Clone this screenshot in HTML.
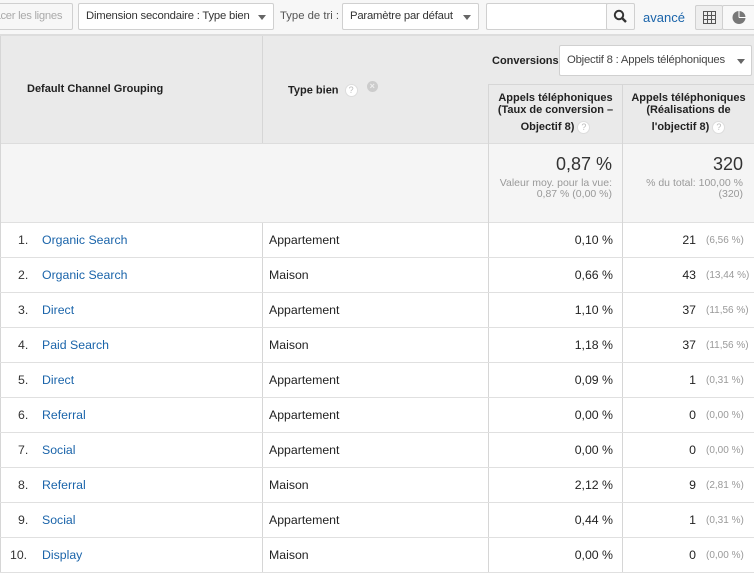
<!DOCTYPE html>
<html><head><meta charset="utf-8"><style>
*{box-sizing:border-box;margin:0;padding:0}
body{width:754px;height:580px;overflow:hidden;background:#fff;font-family:"Liberation Sans",Arial,sans-serif;font-size:12px;color:#222;position:relative}
.a{position:absolute}
.btn{position:absolute;border:1px solid #d0d0d0;border-radius:2px;background:#fff;height:27px;top:3px;line-height:25px;font-size:11.3px;color:#333;padding-left:7px;white-space:nowrap;overflow:hidden}
.caret{position:absolute;right:7px;top:11px;width:0;height:0;border-left:4px solid transparent;border-right:4px solid transparent;border-top:5px solid #666}
.q{display:inline-block;width:13px;height:13px;border-radius:50%;background:#fff;border:1px solid #ddd;color:#bbb;font-size:9px;line-height:11px;text-align:center;font-weight:normal;vertical-align:middle}
.hd{font-weight:bold;font-size:11px;color:#222}
.row{position:absolute;left:0;width:754px;height:35px;border-bottom:1px solid #e0e0e0;font-size:12.3px;line-height:35px}
.row span{position:absolute}
.n{left:18px;color:#333}
.c{left:42px;color:#1a64aa}
.t{left:269px;color:#222}
.p{right:141px;color:#222}
.v{right:58px;color:#222}
.s{left:706px;color:#999;font-size:10px}
.vl{position:absolute;width:1px;background:#d6d6d6}
</style></head><body>
<div class="a" style="left:0;top:0;width:754px;height:36px;background:#f7f7f7;border-bottom:2px solid #ddd"></div>
<div class="btn" style="left:-10px;width:83px;color:#aaa;padding-left:0;background:#f7f7f7;letter-spacing:-0.3px">racer les lignes</div>
<div class="btn" style="left:78px;width:196px;letter-spacing:-0.2px">Dimension secondaire : Type bien<i class="caret"></i></div>
<div class="a" style="left:280px;top:10px;color:#555;font-size:11.3px">Type de tri :</div>
<div class="btn" style="left:342px;width:137px;letter-spacing:-0.2px">Paramètre par défaut<i class="caret"></i></div>
<div class="btn" style="left:486px;width:122px;border-right:none"></div>
<div class="btn" style="left:606px;width:29px;padding:0;background:#f8f8f8"><svg width="27" height="25" viewBox="0 0 27 25"><circle cx="12" cy="11" r="4.2" fill="none" stroke="#333" stroke-width="2"/><path d="M15 14l4 4" stroke="#333" stroke-width="2.4"/></svg></div>
<div class="a" style="left:643px;top:10px;color:#1a64aa;font-size:13px">avancé</div>
<div class="btn" style="left:695px;width:28px;top:5px;height:25px;padding:0;background:#eee"><svg width="26" height="23" viewBox="0 0 26 23"><g fill="none" stroke="#555" stroke-width="1"><rect x="7.5" y="5.5" width="12" height="12"/><path d="M11.5 5.5v12M15.5 5.5v12M7.5 9.5h12M7.5 13.5h12"/></g></svg></div>
<div class="btn" style="left:722px;width:40px;top:5px;height:25px;padding:0;background:#f8f8f8"><svg width="30" height="23" viewBox="0 0 30 23"><circle cx="16" cy="11.5" r="6.5" fill="#777"/><path d="M16 11.5V5M16 11.5H22.5" stroke="#fff" stroke-width="1"/></svg></div>

<div class="a" style="left:0;top:36px;width:754px;height:107px;background:#eaeaea"></div>
<div class="a" style="left:488px;top:84px;width:266px;height:1px;background:#d6d6d6"></div>
<div class="a" style="left:0;top:143px;width:754px;height:80px;background:#f5f5f5;border-top:1px solid #ddd;border-bottom:1px solid #e0e0e0"></div>
<div class="vl" style="left:0;top:36px;height:537px"></div>
<div class="vl" style="left:262px;top:36px;height:107px"></div>
<div class="vl" style="left:262px;top:223px;height:350px"></div>
<div class="vl" style="left:488px;top:84px;height:489px"></div>
<div class="vl" style="left:622px;top:84px;height:489px"></div>

<div class="a hd" style="left:27px;top:83px">Default Channel Grouping</div>
<div class="a hd" style="left:288px;top:84px">Type bien &nbsp;<span class="q">?</span> <span style="display:inline-block;width:11px;height:11px;border-radius:50%;background:#ccc;color:#eee;font-size:9px;line-height:11px;text-align:center;vertical-align:middle;margin-left:6px;margin-top:-8px">×</span></div>
<div class="a hd" style="left:492px;top:55px">Conversions</div>
<div class="btn" style="left:559px;top:45px;width:193px;height:31px;line-height:29px;color:#444;padding-left:7px;letter-spacing:-0.2px">Objectif 8 : Appels téléphoniques<i class="caret" style="top:13px;right:6px"></i></div>
<div class="a hd" style="left:489px;top:92px;width:133px;text-align:center;line-height:12px">Appels téléphoniques<br>(Taux de conversion –<br><span style="line-height:22px">Objectif 8) <span class="q">?</span></span></div>
<div class="a hd" style="left:623px;top:92px;width:131px;text-align:center;line-height:12px">Appels téléphoniques<br>(Réalisations de<br><span style="line-height:22px">l'objectif 8) <span class="q">?</span></span></div>

<div class="a" style="right:142px;top:154px;font-size:18px;color:#333">0,87 %</div>
<div class="a" style="right:142px;top:178px;font-size:10.5px;color:#999;text-align:right;line-height:11px">Valeur moy. pour la vue:<br>0,87 % (0,00 %)</div>
<div class="a" style="right:11px;top:154px;font-size:18px;color:#333">320</div>
<div class="a" style="right:11px;top:178px;font-size:10.5px;color:#999;text-align:right;line-height:11px">% du total: 100,00 %<br>(320)</div>

<div class="row" style="top:223px"><span class="n">1.</span><span class="c">Organic Search</span><span class="t">Appartement</span><span class="p">0,10 %</span><span class="v">21</span><span class="s">(6,56 %)</span></div>
<div class="row" style="top:258px"><span class="n">2.</span><span class="c">Organic Search</span><span class="t">Maison</span><span class="p">0,66 %</span><span class="v">43</span><span class="s">(13,44 %)</span></div>
<div class="row" style="top:293px"><span class="n">3.</span><span class="c">Direct</span><span class="t">Appartement</span><span class="p">1,10 %</span><span class="v">37</span><span class="s">(11,56 %)</span></div>
<div class="row" style="top:328px"><span class="n">4.</span><span class="c">Paid Search</span><span class="t">Maison</span><span class="p">1,18 %</span><span class="v">37</span><span class="s">(11,56 %)</span></div>
<div class="row" style="top:363px"><span class="n">5.</span><span class="c">Direct</span><span class="t">Appartement</span><span class="p">0,09 %</span><span class="v">1</span><span class="s">(0,31 %)</span></div>
<div class="row" style="top:398px"><span class="n">6.</span><span class="c">Referral</span><span class="t">Appartement</span><span class="p">0,00 %</span><span class="v">0</span><span class="s">(0,00 %)</span></div>
<div class="row" style="top:433px"><span class="n">7.</span><span class="c">Social</span><span class="t">Appartement</span><span class="p">0,00 %</span><span class="v">0</span><span class="s">(0,00 %)</span></div>
<div class="row" style="top:468px"><span class="n">8.</span><span class="c">Referral</span><span class="t">Maison</span><span class="p">2,12 %</span><span class="v">9</span><span class="s">(2,81 %)</span></div>
<div class="row" style="top:503px"><span class="n">9.</span><span class="c">Social</span><span class="t">Appartement</span><span class="p">0,44 %</span><span class="v">1</span><span class="s">(0,31 %)</span></div>
<div class="row" style="top:538px"><span class="n" style="left:10px">10.</span><span class="c">Display</span><span class="t">Maison</span><span class="p">0,00 %</span><span class="v">0</span><span class="s">(0,00 %)</span></div>
</body></html>
